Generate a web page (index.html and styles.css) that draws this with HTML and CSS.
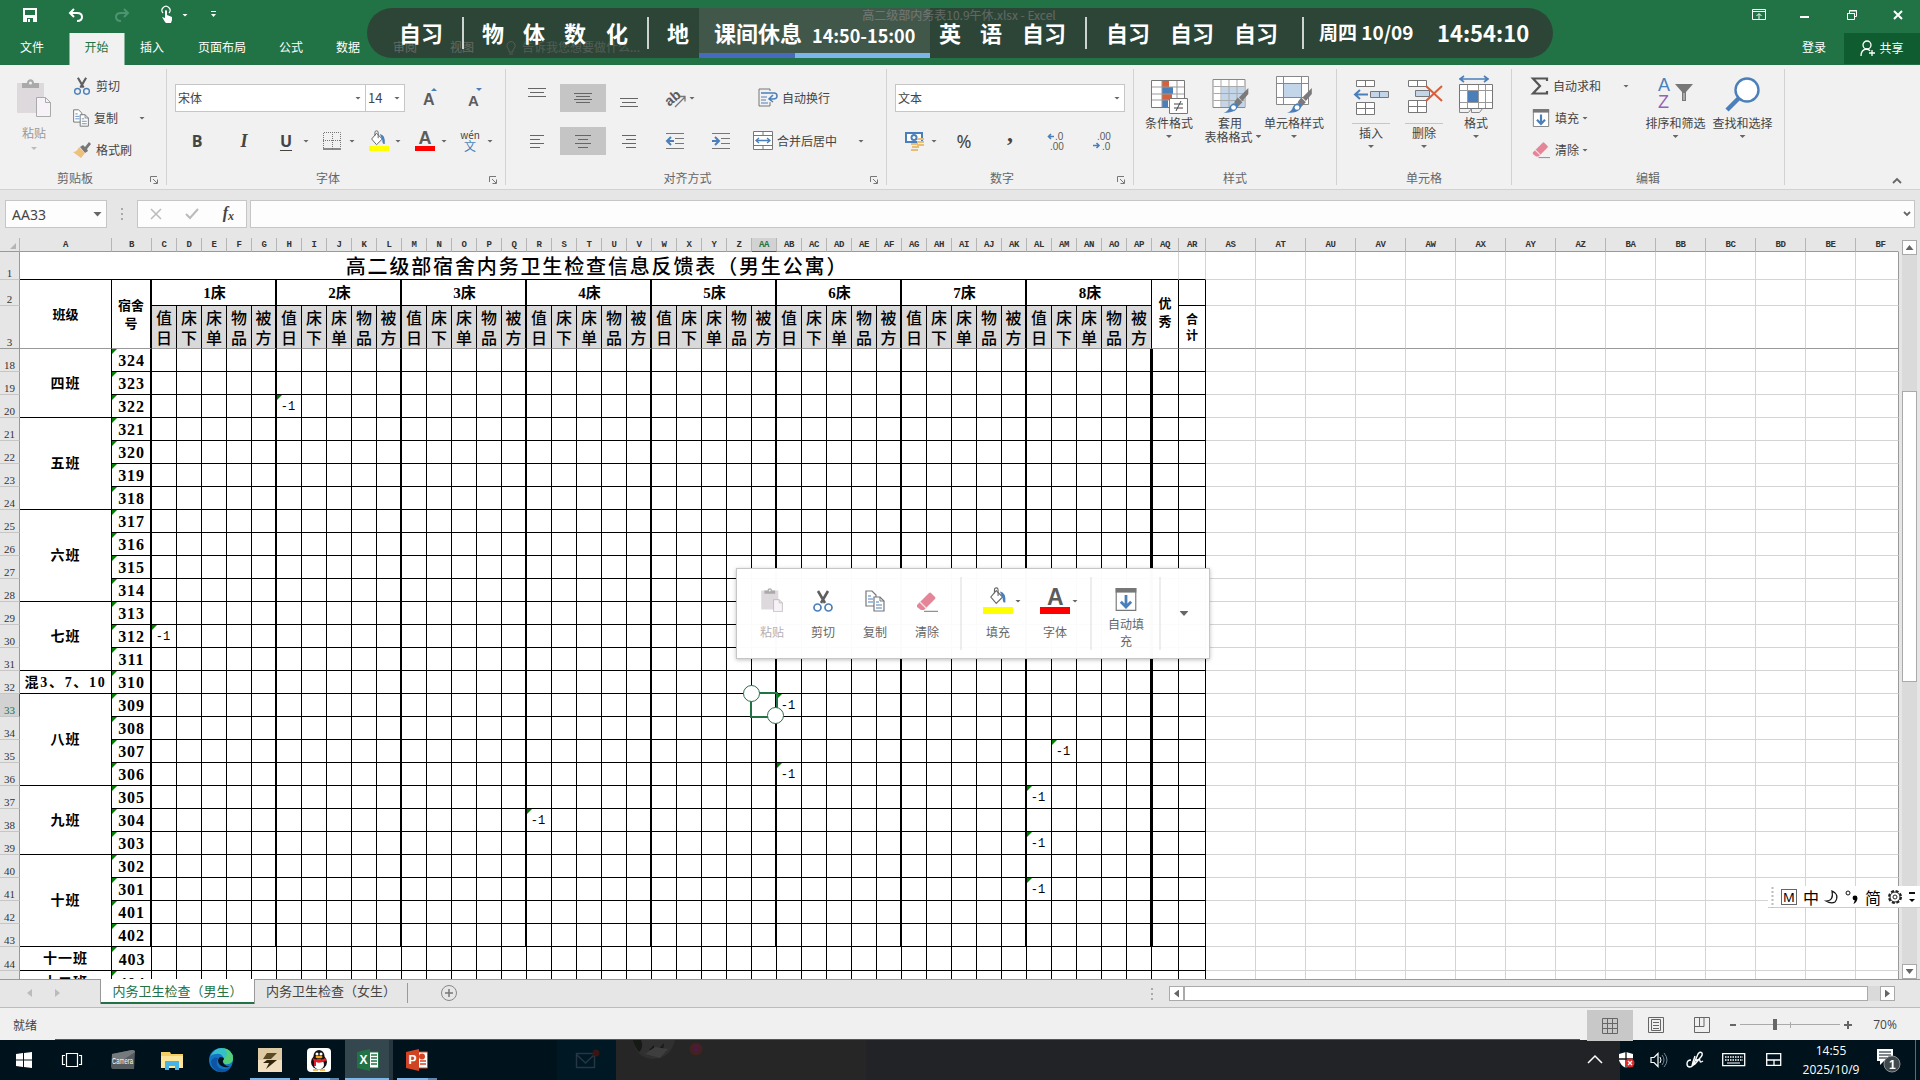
FILE: index.html
```html
<!DOCTYPE html>
<html lang="zh-CN">
<head>
<meta charset="utf-8">
<title>高二级部内务表10.9午休.xlsx - Excel</title>
<link rel="stylesheet" href="styles.css">
</head>
<body>
<svg width="0" height="0" class="defs">
  <symbol id="cut" viewBox="0 0 20 22"><path d="M5 1l7 12M15 1L8 13" stroke="#5f5f5f" stroke-width="2.6" fill="none"/><circle cx="4.5" cy="17.5" r="3.5" fill="none" stroke="#4a7fba" stroke-width="1.7"/><circle cx="15.5" cy="17.5" r="3.5" fill="none" stroke="#4a7fba" stroke-width="1.7"/></symbol>
  <symbol id="copy" viewBox="0 0 20 22"><path d="M1 1h6l4 4v11H1z" fill="#fff" stroke="#777" stroke-width="1.2"/><path d="M3 6h3M3 9h5M3 12h5" stroke="#4a7fba"/><path d="M9 7h6l4 4v10H9z" fill="#fff" stroke="#777" stroke-width="1.2"/><path d="M15 7v4h4" fill="none" stroke="#777"/><path d="M11 12h3M11 15h6M11 18h6" stroke="#4a7fba"/></symbol>
  <symbol id="paste" viewBox="0 0 34 38"><path d="M0 4h27v30H0z" fill="#ded9dc"/><path d="M5 4h5c0-5 7-5 7 0h5v5H5z" fill="#aaa"/><circle cx="13.500" cy="4" r="1.500" fill="#f1f1f1"/><path d="M19.500 18.500h9l5 5v14h-14z" fill="#f6f2f7" stroke="#aaa"/><path d="M28.500 18.500v5h5" fill="none" stroke="#aaa"/></symbol>
  <symbol id="eraser" viewBox="0 0 22 20"><path d="M1 13L13 1q1-1 2 0l4 4q1 1 0 2L8 18H5L1 15z" fill="#e58598"/><path d="M4 10l6 6" stroke="#f7dfe4" stroke-width="1.300"/><path d="M8 19.300h14" stroke="#777"/></symbol>
  <symbol id="fill" viewBox="0 0 18 20"><path d="M.5.5h17v19H.5z" fill="#fff" stroke="#777"/><path d="M0 0h18v4H0z" fill="#777"/><path d="M9 6v10M4.500 12L9 16.500 13.500 12" fill="none" stroke="#4a7fba" stroke-width="2.400"/></symbol>
  <symbol id="bucket" viewBox="0 0 22 22"><path d="M8 4l7 7-7 7-6-7z" fill="#fff" stroke="#666" stroke-width="1.200"/><path d="M6 7V3q0-2 2-2t2 2v7" fill="none" stroke="#666" stroke-width="1.200"/><path d="M12 5q7 1 6 12-3 1-3-5z" fill="#4a7fba"/></symbol>
  <symbol id="brush" viewBox="0 0 22 22"><path d="M21 0v5l-5 6-3-3z" fill="#7a7a7a"/><path d="M12 8l4 4-4 4-3-4z" fill="#7a7a7a"/><path d="M0 21q4-1 5-5 3-5 7-2 1 7-12 7z" fill="#4a7fba"/><circle cx="8.500" cy="16.500" r="2" fill="#fff"/></symbol>
  <symbol id="launch" viewBox="0 0 8 8"><path d="M.5 6V.5H7M3 3l4 4M7.500 3.500v4h-4" fill="none" stroke="#777"/></symbol>
  <symbol id="al" viewBox="0 0 18 14"><path d="M2 1.500h14M2 5.500h10M2 9.500h14M2 13.500h10" stroke="#666"/></symbol>
  <symbol id="ac" viewBox="0 0 18 14"><path d="M1 1.500h16M4 5.500h10M1 9.500h16M4 13.500h10" stroke="#666"/></symbol>
  <symbol id="ar" viewBox="0 0 18 14"><path d="M2 1.500h14M6 5.500h10M2 9.500h14M6 13.500h10" stroke="#666"/></symbol>
  <symbol id="three" viewBox="0 0 18 10"><path d="M0 .5h18M2 4.500h14M0 8.500h18" stroke="#666"/></symbol>
  <symbol id="indent" viewBox="0 0 18 16"><path d="M0 .5h18M9 5.500h9M9 10.500h9M0 15.500h18" stroke="#777"/></symbol>
</svg>

<header class="top">
  <div class="pts titlebar">
    <svg width="14" height="14"><path d="M0 0h14v14H0z" fill="#fff"/><path d="M2 2h10v5H2zM4 10h6v4H4z" fill="#217346"/><path d="M5 11h2v3H5z" fill="#fff"/></svg>
    <svg width="16" height="14"><path d="M6 1L2 5l4 4M2 5h7q5 0 5 4t-5 4" fill="none" stroke="#fff" stroke-width="2"/></svg>
    <svg width="16" height="14"><path d="M10 1l4 4-4 4M14 5H7Q2 5 2 9t5 4" fill="none" stroke="#4f9470" stroke-width="2"/></svg>
    <svg width="14" height="16"><path d="M4 15l-3-5 3 1V4q1-2 2 0v4l5 2v3l-1 3H5z" fill="#fff"/><path d="M2 6a4 4 0 1 1 6 0" fill="none" stroke="#fff" stroke-width="1.200"/></svg>
    <i class="dd w"></i>
    <svg width="8" height="8"><path d="M1 .5h5" stroke="#fff"/><path d="M1 3h5L3.500 6z" fill="#fff"/></svg>
    <span class="doc">高二级部内务表10.9午休.xlsx - Excel</span>
    <svg width="14" height="12"><path d="M.5.5h13v10H.5zM.5 2.500h13M7 10V5M4.500 7L7 4.500 9.500 7" fill="none" stroke="#fff"/></svg>
    <svg width="10" height="10"><path d="M0 7h9" stroke="#fff" stroke-width="2"/></svg>
    <svg width="10" height="10"><path d="M2.500 3V.5h7v6H7M.5 3.500h7v6h-7zM0 3.500h8M2 1h8" fill="none" stroke="#fff"/></svg>
    <svg width="10" height="10"><path d="M1 1l8 8M9 1L1 9" stroke="#fff" stroke-width="2"/></svg>
  </div>
  <nav class="pts tabs">
    <span>文件</span><span class="active">开始</span><span>插入</span><span>页面布局</span><span>公式</span><span>数据</span><span>审阅</span><span>视图</span>
    <svg width="10" height="14"><path d="M3 9Q0 6 1 3q4-5 8 0 1 3-2 6v2H3zM3 13h4" fill="none" stroke="#b9d4c5"/></svg>
    <span class="l tell">告诉我您想要做什么...</span><span>登录</span>
    <span class="share"><svg width="16" height="16"><circle cx="7" cy="5" r="4" fill="none" stroke="#fff" stroke-width="1.300"/><path d="M1 16q0-6 5-7 3 0 4 2M12 10v6M9 13h6" fill="none" stroke="#fff" stroke-width="1.300"/></svg>共享</span>
  </nav>
  <div class="schedule">
    <b>自习</b><hr><b>物</b><b>体</b><b>数</b><b>化</b><hr><b>地</b>
    <div class="break"><b>课间休息</b><b class="time">14:50-15:00</b></div>
    <b>英</b><b>语</b><b>自习</b><hr><b>自习</b><b>自习</b><b>自习</b><hr><b class="date">周四 10/09</b><b>14:54:10</b>
  </div>
</header>

<section class="ribbon">
  <div class="group g1">
    <div class="clip">
      <div class="paste"><svg width="34" height="38"><use href="#paste"/></svg><span>粘贴</span><i class="dd"></i></div>
      <div class="cmds">
        <div><svg width="18" height="18"><use href="#cut"/></svg><span>剪切</span></div>
        <div class="near"><svg width="18" height="18"><use href="#copy"/></svg><span>复制</span><i class="dd"></i></div>
        <div><svg width="18" height="16"><path d="M16 0l2 2-4 5 1 2-3 2-5-6 3-2 2 2z" fill="#777"/><path d="M6 5l6 6-4 5-8-6q4 0 6-5z" fill="#eec07c"/></svg><span>格式刷</span></div>
      </div>
    </div>
    <footer>剪贴板<svg width="8" height="8"><use href="#launch"/></svg></footer>
  </div>
  <div class="group g2">
    <div class="row font-row"><div class="combo name">宋体<i class="dd"></i></div><div class="combo size">14<i class="dd"></i></div>
      <svg width="18" height="20"><text x="1" y="17" font-size="16" font-weight="bold">A</text><path d="M9 3l3-3 3 3z" fill="#4a7fba"/></svg>
      <svg width="18" height="20"><text x="1" y="18" font-size="15" font-weight="bold">A</text><path d="M9 0h6l-3 3z" fill="#4a7fba"/></svg></div>
    <div class="row pts style-row">
      <b class="ltr">B</b><b class="ltr it">I</b><b class="ltr un">U</b><i class="dd"></i>
      <svg width="18" height="18"><path d="M.5 16V.5h17V16M9.500 0v17M0 8.500h18" stroke="#777" stroke-dasharray="1 1" fill="none"/><path d="M0 17h18" stroke="#666" stroke-width="1.500"/></svg><i class="dd"></i>
      <svg width="20" height="22"><use href="#bucket" width="20" height="18"/><path d="M0 16h20v5H0z" fill="#ff0"/></svg><i class="dd"></i>
      <svg width="20" height="22"><text x="3.500" y="14" font-size="18" font-weight="bold">A</text><path d="M0 16h20v5H0z" fill="red"/></svg><i class="dd"></i>
      <span class="wen">wén<em>文</em></span><i class="dd"></i>
    </div>
    <footer>字体<svg width="8" height="8"><use href="#launch"/></svg></footer>
  </div>
  <div class="group g3">
    <div class="row pts al1">
      <svg class="up" width="18" height="10"><use href="#three"/></svg><span class="on"><svg width="18" height="12"><path d="M0 1.500h18M2 4.500h14M0 7.500h18M2 10.500h14" stroke="#666"/></svg></span><svg class="down" width="18" height="10"><use href="#three"/></svg>
      <svg width="20" height="20"><text x="-2" y="13" font-size="14" font-weight="bold" transform="rotate(-40 8 10)">ab</text><path d="M8 19L18 9M13 8.500h5v5" fill="none" stroke="#777" stroke-width="1.300"/></svg><i class="dd"></i>
      <svg width="20" height="20"><path d="M12 1H1v17h11v-4M12 1v2" fill="none" stroke="#777"/><path d="M3 5h13q3 0 3 3t-4 3h-3M15 7l-4 4 4 3" fill="none" stroke="#4a7fba" stroke-width="1.500"/><path d="M3 9h6M3 12h5M3 15h7" stroke="#4a7fba"/></svg><span class="l">自动换行</span>
    </div>
    <div class="row pts al2">
      <svg width="18" height="14"><use href="#al"/></svg><span class="on"><svg width="18" height="14"><use href="#ac"/></svg></span><svg width="18" height="14"><use href="#ar"/></svg>
      <svg width="18" height="16"><use href="#indent"/><path d="M8 8H2M5 4L1 8l4 4" fill="none" stroke="#4a7fba" stroke-width="2"/></svg>
      <svg width="18" height="16"><use href="#indent"/><path d="M0 8h6M3 4l4 4-4 4" fill="none" stroke="#4a7fba" stroke-width="2"/></svg>
      <svg width="20" height="20"><path d="M.5.5h19v18H.5zM0 4.500h20M0 14.500h20M10 0v4M10 15v4" fill="#fff" stroke="#777"/><path d="M3 9.500h14M6 7L3 9.500 6 12M14 7l3 2.500-3 2.500" fill="none" stroke="#4a7fba" stroke-width="1.300"/></svg><span class="l">合并后居中</span><i class="dd"></i>
    </div>
    <footer>对齐方式<svg width="8" height="8"><use href="#launch"/></svg></footer>
  </div>
  <div class="group g4">
    <div class="row"><div class="combo num">文本<i class="dd"></i></div></div>
    <div class="row pts num-row">
      <svg width="20" height="20"><path d="M1 1h18v11H1z" fill="#4a7fba"/><path d="M3 3h14v7H3z" fill="#fff"/><circle cx="10" cy="6.500" r="3.500" fill="#4a7fba"/><circle cx="10" cy="6.500" r="1.500" fill="#fff"/><path d="M7 13h7M8 16h7M7 19h7M13 8h7M13 11h7M13 14h7" stroke="#e9bd73" stroke-width="2"/></svg><i class="dd"></i>
      <span class="pct">%</span><b class="comma">,</b>
      <svg width="18" height="18"><path d="M7 4.500H2M4 2L1.500 4.500 4 7" stroke="#4a7fba" stroke-width="1.600" fill="none"/><text x="8" y="8" font-size="10">.0</text><text x="3" y="18" font-size="10">.00</text></svg>
      <svg width="18" height="18"><path d="M0 13.500h6M3.500 11L6 13.500 3.500 16" stroke="#4a7fba" stroke-width="1.600" fill="none"/><text x="4" y="8" font-size="10">.00</text><text x="9" y="18" font-size="10">.0</text></svg>
    </div>
    <footer>数字<svg width="8" height="8"><use href="#launch"/></svg></footer>
  </div>
  <div class="group g5">
    <div class="pts bigs">
      <div class="big"><svg width="38" height="38"><path d="M1.500 4.500h33v27h-33z" fill="#fff" stroke="#777"/><path d="M12 5h7v6h-7zM12 18h10v6H12z" fill="#d75f3c"/><path d="M12 11h11v7H12zM12 24h6v7h-6z" fill="#4a7fba"/><path d="M2 11h32M2 18h32M2 24h32M12 5v26M27 5v26" stroke="#999"/><path d="M19.500 22.500h18v15h-18z" fill="#fff" stroke="#777"/><path d="M24 28h9M24 32h9M31 25l-5 10" stroke="#444"/></svg><span>条件格式</span><i class="dd"></i></div>
      <div class="big"><svg width="38" height="38"><path d="M1.500 3.500h32v28h-32z" fill="#fff" stroke="#888"/><path d="M10 11h23v20H10z" fill="#c3d5e8"/><path d="M2 10.500h31M2 17.500h31M2 24.500h31M9.500 4v27M17.500 4v27M25.500 4v27" stroke="#aaa"/><use href="#brush" x="12" y="12" width="26" height="26"/></svg><span>套用</span><span class="second">表格格式<i class="dd in"></i></span></div>
      <div class="big"><svg width="38" height="38"><path d="M1.500.5h32v28h-32z" fill="#fff" stroke="#888"/><path d="M8 7h18v14H8z" fill="#c3d5e8"/><path d="M2 7.500h31M2 21.500h31M8.500 1v27M26.500 1v27" stroke="#888"/><use href="#brush" x="12" y="12" width="26" height="26"/></svg><span>单元格样式</span><i class="dd"></i></div>
    </div>
    <footer>样式</footer>
  </div>
  <div class="group g6">
    <div class="pts bigs">
      <div class="big split"><svg width="36" height="38"><path d="M3.500 4.500h18v6h-18zM12.500 4v7M3.500 26.500h18v12h-18zM12.500 26v12M3 32.500h19" fill="#fff" stroke="#777"/><path d="M17.500 15.500h18v6h-18z" fill="#c3d5e8" stroke="#777"/><path d="M26.500 16v5" stroke="#777"/><path d="M15 18.500H2M7 14l-5 4.500L7 23" fill="none" stroke="#4a7fba" stroke-width="2"/></svg><span>插入</span><i class="dd"></i></div>
      <div class="big split"><svg width="36" height="38"><path d="M2.500 4.500h18v6h-18zM11.500 4v7M2.500 24.500h18v12h-18zM11.500 24v12M2 30.500h19" fill="#fff" stroke="#777"/><path d="M9.500 14.500h14v6h-14z" fill="#c3d5e8" stroke="#777"/><path d="M20 10l16 15M36 10L20 25" fill="none" stroke="#d75f3c" stroke-width="2"/></svg><span>删除</span><i class="dd"></i></div>
      <div class="big"><svg width="36" height="38"><path d="M1 3h30M6 0L2 3l4 3M26 0l4 3-4 3" fill="none" stroke="#4a7fba" stroke-width="1.600"/><path d="M1.500 8.500h33v24h-33z" fill="#fff" stroke="#777"/><path d="M9 15h11v11H9z" fill="#4a7fba"/><path d="M2 14.500h32M2 26.500h32M9.500 9v23M20.500 9v23M27.500 9v23" stroke="#999"/><path d="M1.500 32v4.500h9l3-4 0 4h8l3-4" fill="none" stroke="#888"/></svg><span>格式</span><i class="dd"></i></div>
    </div>
    <footer>单元格</footer>
  </div>
  <div class="group g7">
    <div class="edit">
      <div class="cmds">
        <div class="sum"><svg width="18" height="18"><path d="M16 4V1.500H2L9 9l-7 7.500h14V14" fill="none" stroke="#555" stroke-width="2.200"/></svg><span>自动求和</span><i class="dd"></i></div>
        <div><svg width="18" height="18"><use href="#fill"/></svg><span>填充</span><i class="dd"></i></div>
        <div><svg width="18" height="18"><use href="#eraser"/></svg><span>清除</span><i class="dd"></i></div>
      </div>
      <div class="big"><svg width="36" height="38"><text class="az" x="0" y="15" font-size="18">A</text><text class="zz" x="0" y="32" font-size="18">Z</text><path d="M17 8h18l-7 8v9h-4v-9z" fill="#777"/><path d="M26 17v7" stroke="#ddd"/></svg><span>排序和筛选</span><i class="dd"></i></div>
      <div class="big"><svg width="36" height="38"><circle cx="22" cy="14" r="11.500" fill="#fff" stroke="#4a7fba" stroke-width="2.400"/><path d="M14 22L2 34" stroke="#4a7fba" stroke-width="4.500"/></svg><span>查找和选择</span><i class="dd"></i></div>
    </div>
    <footer>编辑</footer>
  </div>
  <svg class="collapse" width="10" height="8"><path d="M1 6l4-4 4 4" fill="none" stroke="#666" stroke-width="1.800"/></svg>
</section>

<section class="formula">
  <div class="namebox">AA33<i class="dd big-dd"></i></div>
  <div class="dots"></div>
  <div class="fx"><svg width="12" height="12"><path d="M1 1l10 10M11 1L1 11" stroke="#bbb" stroke-width="1.500"/></svg><svg width="14" height="12"><path d="M1 6l4 4 8-9" fill="none" stroke="#bbb" stroke-width="2"/></svg><i class="fxi">f<sub>x</sub></i></div>
  <div class="input"><svg width="8" height="6"><path d="M1 1l3 3 3-3" fill="none" stroke="#666" stroke-width="1.800"/></svg></div>
</section>

<main class="sheet">
  <div class="cells"><table id="grid"></table></div>
  <div class="vscroll"><i class="btn"><i class="tri u"></i></i><div class="thumb"></div><i class="btn end"><i class="tri d"></i></i></div>
</main>

<section class="sheettabs">
  <i class="tri lft pale"></i><i class="tri rgt pale"></i>
  <span class="tab active">内务卫生检查（男生）</span><span class="tab">内务卫生检查（女生）</span>
  <svg class="plus" width="18" height="18"><circle cx="9" cy="9" r="7.500" fill="none" stroke="#888"/><path d="M9 5v8M5 9h8" stroke="#777" stroke-width="1.500"/></svg>
  <div class="dots"></div>
  <div class="hscroll"><i class="btn"><i class="tri lft"></i></i><div class="thumb"></div><i class="btn end"><i class="tri rgt"></i></i></div>
</section>

<section class="pts status">
  <span>就绪</span>
  <span class="view"><svg width="18" height="18"><path d="M1.500 1.500h15v15h-15zM1 6.500h16M1 11.500h16M6.500 1v16M11.500 1v16" fill="none" stroke="#666"/></svg></span>
  <svg width="18" height="18"><path d="M1.500 1.500h15v15h-15zM4.500 3.500h9v11h-9zM6 6.500h6M6 9.500h6M6 12.500h6" fill="none" stroke="#666"/></svg>
  <svg width="18" height="18"><path d="M1.500 1.500h15v15h-15zM1 10.500h10v-9M6.500 1v9" fill="none" stroke="#666"/></svg>
  <svg width="8" height="8"><path d="M1 4h6" stroke="#666" stroke-width="2"/></svg>
  <div class="slider"><i></i></div>
  <svg width="8" height="8"><path d="M0 4h8M4 0v8" stroke="#666" stroke-width="2"/></svg>
  <span class="zoom">70%</span>
</section>

<footer class="pts taskbar">
  <svg width="16" height="16"><path d="M0 2l7-1v6.500H0zM8 1l8-1v7.500H8zM0 8.500h7V15l-7-1zM8 8.500h8V16l-8-1z" fill="#fff"/></svg>
  <svg width="20" height="16"><path d="M4.500 1.500h11v13h-11zM3 3.500H.5v9H3M17 3.500h2.500v9H17" fill="none" stroke="#fff" stroke-width="1.200"/></svg>
  <svg width="24" height="22"><path d="M1 5l20-4q3 0 3 2l-1 17H2q-2 0-2-3z" fill="#555b5f"/><path d="M1 5l20-4q3 0 3 2l-12 8H1z" fill="#757a7d"/><text class="cam" x="1" y="15" font-size="9" textLength="21" lengthAdjust="spacingAndGlyphs">Camera</text></svg>
  <svg width="22" height="20"><path d="M0 2h9l1 2h12v14H0z" fill="#f5cf62"/><path d="M0 6h22v12H0z" fill="#ffe69a"/><path d="M4 20v-9h14v9h-4v-4H8v4z" fill="#45b5e8"/></svg>
  <svg width="24" height="24"><circle cx="12" cy="12" r="12" fill="#1474c4"/><path d="M1 9Q5 0 13 0q11 1 11 11-1 6-8 5-3-2-1-5-2-6-8-5-4 0-6 3z" fill="#35bfc9"/><path d="M13 0q11 1 11 11-1 6-8 5-3-2-1-5 3-3 3-6-1-4-5-5z" fill="#54cf78"/><path d="M9 10q-4 9 4 11 5 1 9-2-3 6-11 5Q2 21 2 13q3-5 7-3z" fill="#0c55a4"/><path d="M11 9q-4 3 0 8 5 4 12 1-3 2-7-1-4-3-1-6 0-2-4-2z" fill="#00131c"/></svg>
  <svg width="24" height="24"><path d="M0 0h24v24H0z" fill="#decaa4"/><path d="M0 12h24v12H0z" fill="#f1dfbf"/><path d="M9 5h10l-6 6H5z" fill="#5a4a24"/><path d="M9 12h10L8 21l3-6H5z" fill="#33260c"/></svg>
  <svg width="24" height="24"><rect width="24" height="24" rx="4" fill="#fff"/><ellipse cx="12" cy="14" rx="8" ry="7.500" fill="#111"/><ellipse cx="12" cy="8" rx="5.500" ry="6" fill="#111"/><ellipse cx="12" cy="16.500" rx="5" ry="5" fill="#fff"/><path d="M5.500 10q6.500 3 13 0l.8 2.500q-7 3.500-10.300 1.500v4H7v-4.500z" fill="#e21c2b"/><circle cx="10" cy="6" r="1.500" fill="#fff"/><circle cx="14" cy="6" r="1.500" fill="#fff"/><ellipse cx="12" cy="9" rx="3.500" ry="1.300" fill="#f8a51b"/><path d="M6 22h5M13 22h5" stroke="#f8a51b" stroke-width="1.500"/></svg>
  <span class="tile"><svg width="22" height="22"><path d="M12 3h9.500v16H12z" fill="#fff" stroke="#217346"/><path d="M14 6h6M14 9h6M14 12h6M14 15h6" stroke="#217346" stroke-width="1.500"/><path d="M0 3l13-3v22L0 19z" fill="#217346"/><text class="app" x="2.500" y="15" font-size="12">X</text></svg></span>
  <svg width="22" height="22"><path d="M12 3h9.500v16H12z" fill="#fff" stroke="#d04423"/><path d="M14 15h6M14 12h6" stroke="#d04423" stroke-width="1.300"/><circle cx="16" cy="7.500" r="3" fill="#d04423"/><path d="M0 3l13-3v22L0 19z" fill="#d04423"/><text class="app" x="2.500" y="15" font-size="12">P</text></svg>
  <svg width="24" height="20"><path d="M2.500 3.500h18v14h-18zM3 5l8.500 8L20 5" fill="none" stroke="#263643" stroke-width="1.500"/><circle cx="22" cy="3" r="3.500" fill="#3a1512"/></svg>
  <svg class="peek" width="72" height="20"><path d="M0 0q3 18 20 19Q38 18 42 0z" fill="#303030"/><path d="M0 0q1 6 6 12 5-4 2-12zM16 10l5-5v5zM26 9l5-6-1 7z" fill="#151a14"/><path d="M12 14l10-7 13 2-8 9z" fill="#3e3e3e"/><circle cx="63" cy="9" r="6.500" fill="#42231f"/><circle cx="63" cy="8" r="3.500" fill="#4c1a3a"/></svg>
  <svg width="16" height="10"><path d="M1 8l7-7 7 7" fill="none" stroke="#fff" stroke-width="1.500"/></svg>
  <svg width="18" height="18"><path d="M8 1l7 2v6q-1 5-7 8-6-3-7-8V3z" fill="#fff"/><path d="M8 1v16M1 8h14" stroke="#111" stroke-width="1.300"/><circle cx="12" cy="12" r="4.500" fill="#d92b2b"/><path d="M10 10l4 4M14 10l-4 4" stroke="#fff" stroke-width="1.200"/></svg>
  <svg width="18" height="16"><path d="M1 5.500h3l4-4v13l-4-4H1z" fill="none" stroke="#fff" stroke-width="1.200"/><path d="M10 5q2 3 0 6" fill="none" stroke="#fff"/><path d="M12 3q4 5 0 10M14 1q6 7 0 14" fill="none" stroke="#789"/></svg>
  <svg width="18" height="18"><path d="M5 9q-4 0-4 4 0 3 3 3 3 0 5-6l3-7q2-3 4-1 1 2-2 5l-5 6-3 2 1-4 2-6M9 10q5-3 5 0 0 2 3 0" fill="none" stroke="#fff" stroke-width="1.400"/></svg>
  <svg width="24" height="14"><path d="M.7.7h22v12H.7z" fill="none" stroke="#fff" stroke-width="1.300"/><path d="M3 4h18M3 7h18" stroke="#fff" stroke-width="1.300" stroke-dasharray="1.500 1"/><path d="M5 10h13" stroke="#fff"/></svg>
  <svg width="16" height="14"><path d="M.7.700h14v11.600H.7zM1 7h14M8 7v5" fill="none" stroke="#fff" stroke-width="1.300"/></svg>
  <span class="clock">14:55<br>2025/10/9</span>
  <svg width="26" height="26"><path d="M2 2h16v12H9l-4 4v-4H2z" fill="#fff"/><path d="M4 5h12M4 8h12M4 11h8" stroke="#00131c" stroke-width="1.200"/><circle cx="17" cy="17" r="8" fill="#40484c" stroke="#8a9195"/><text class="badge" x="14" y="21.500" font-size="12">1</text></svg>
</footer>

<aside class="mini">
  <div class="pts mini-row">
    <div class="pale-item"><svg width="22" height="24"><use href="#paste"/></svg><span>粘贴</span></div>
    <div><svg width="20" height="22"><use href="#cut"/></svg><span>剪切</span></div>
    <div><svg width="20" height="22"><use href="#copy"/></svg><span>复制</span></div>
    <div><svg width="22" height="20"><use href="#eraser"/></svg><span>清除</span></div>
    <hr>
    <div><svg width="30" height="28"><use href="#bucket" x="4" width="24" height="20"/><path d="M0 20h30v7H0z" fill="#ff0"/></svg><span>填充</span></div><i class="dd side"></i>
    <div><svg width="30" height="28"><text x="7" y="18" font-size="23" font-weight="bold">A</text><path d="M0 20h30v7H0z" fill="red"/></svg><span>字体</span></div><i class="dd side"></i>
    <hr>
    <div class="auto"><svg width="22" height="23"><use href="#fill"/></svg><span>自动填<br>充</span></div>
    <hr><i class="dd big-dd"></i>
  </div>
</aside>

<aside class="ime">
  <svg width="4" height="22"><path d="M1.500 1v21" stroke="#bbb" stroke-width="2" stroke-dasharray="2 2"/></svg>
  <span class="box">M</span><span>中</span>
  <svg width="14" height="14"><path d="M7 1q8 4 3 11-4 2-9-1 8 0 6-10z" fill="none" stroke="#111" stroke-width="1.200"/></svg>
  <svg width="14" height="14"><circle cx="3" cy="3" r="2" fill="none" stroke="#111"/><circle cx="10" cy="8" r="2.400"/><path d="M12.400 8q0 4-4 6l2-5z"/></svg>
  <span>简</span>
  <svg width="16" height="16"><circle cx="8" cy="8" r="6" fill="none" stroke="#222" stroke-width="2" stroke-dasharray="3 1.700"/><circle cx="8" cy="8" r="5" fill="none" stroke="#222"/><circle cx="8" cy="8" r="2" fill="none" stroke="#222"/></svg>
  <svg class="more" width="6" height="12"><path d="M0 2h6" stroke="#111" stroke-width="2"/><path d="M0 8h6l-3 3z"/></svg>
</aside>
<script src="script.js"></script>
</body>
</html>
```
FILE: styles.css
```css
* { box-sizing: border-box; }
body { margin: 0; width: 1920px; height: 1080px; overflow: hidden; display: flex; flex-direction: column; position: relative; background: #e6e6e6; color: #444; font: 12px/16px "Noto Sans CJK SC", sans-serif; }
svg { display: block; flex: none; overflow: visible; }
svg text { font-family: "Liberation Sans", sans-serif; fill: #5c5c5c; }
.defs { position: absolute; }
i { font-style: normal; }
hr { border: 0; margin: 0; }

/* Rows whose items are centred on the start of their column */
.pts { display: grid; align-items: center; }
.pts > * { justify-self: start; translate: -50% 0; white-space: nowrap; }
.pts > .l { translate: none; }

.dd { display: block; width: 6px; height: 3px; background: #666; clip-path: polygon(0 0, 100% 0, 50% 100%); flex: none; }
.dd.w { background: #fff; }
.dd.big-dd { width: 9px; height: 5px; }
.tri { display: block; width: 8px; height: 5px; background: #666; }
.tri.u { clip-path: polygon(0 100%, 50% 0, 100% 100%); }
.tri.d { clip-path: polygon(0 0, 50% 100%, 100% 0); }
.tri.lft { width: 5px; height: 8px; clip-path: polygon(0 50%, 100% 0, 100% 100%); }
.tri.rgt { width: 5px; height: 8px; clip-path: polygon(0 0, 100% 50%, 0 100%); }
.tri.pale { background: #bbb; }

/* Title bar and tabs */
.top { height: 65px; flex: none; background: #217346; color: #fff; position: relative; }
.titlebar { height: 30px; padding-left: 30px; grid-template-columns: 46px 46px 46px 17px 29px 745px 800px 46px 47px 46px 20px; }
.tabs { height: 35px; padding-left: 32px; grid-template-columns: 64.500px 55.500px 70px 69px 57px 57px 57px 49px 11px 1292px 68px 38px; }
.tabs > span { margin-top: -1px; }
.tabs .active { margin-top: 3px; width: 55px; height: 32px; line-height: 28px; background: #f1f1f1; color: #217346; text-align: center; }
.tell { color: #b9d4c5; }
.tabs .share { margin-top: 2px; width: 76px; height: 31px; padding-bottom: 2px; background: #0e5c2f; display: flex; align-items: center; justify-content: center; gap: 3px; }
.schedule { position: absolute; left: 367px; top: 8px; width: 1186px; height: 50px; border-radius: 25px; background: rgba(49, 55, 50, .76); display: grid; align-items: center; padding-left: 32px; overflow: hidden; grid-template-columns: 63px 20px 41px 41px 42px 41px 20px 32px 240px 41px 42px 63px 21px 64px 64px 68px 17px 118px 100px; font-size: 22px; line-height: 48px; white-space: nowrap; }
.schedule hr { width: 2px; height: 32px; background: #cdd3cf; }
.schedule > b { margin-top: -2px; }
.break { width: 231px; height: 50px; padding-left: 15px; display: flex; gap: 10px; background: linear-gradient(90deg, #466abd 0 96px, #7cb5ea 96px) bottom / 100% 5px no-repeat, rgba(255, 255, 255, .1); }
.time { font-size: 18px; line-height: 54px; }
.date { font-size: 19px; }

/* Ribbon */
.ribbon { height: 125px; flex: none; display: flex; background: #f1f1f1; border-bottom: 1px solid #d2d2d2; }
.group { height: 116px; margin-top: 4px; border-right: 1px solid #d2d2d2; display: flex; flex-direction: column; }
.group footer { height: 14px; margin-top: auto; line-height: 14px; text-align: center; color: #666; position: relative; }
.group footer svg { position: absolute; right: 8px; top: 5px; }
.g1 { width: 167px; } .g2 { width: 339px; } .g3 { width: 381px; } .g4 { width: 247px; } .g5 { width: 203px; } .g6 { width: 175px; } .g7 { width: 273px; }
.g1 footer { padding-right: 16px; } .g2 footer { padding-right: 16px; } .g3 footer { padding-right: 17px; } .g4 footer { padding-right: 16px; }
.clip, .edit { display: flex; }
.paste { width: 68px; padding-top: 10px; display: flex; flex-direction: column; align-items: center; color: #999; }
.paste span { margin: 8px 0 6px; }
.paste .dd { background: #bbb; }
.cmds { padding: 1px 0 0 5px; }
.cmds > div { height: 32px; display: flex; align-items: center; gap: 5px; white-space: nowrap; }
.cmds .near { gap: 4px; margin-left: -1px; }
.cmds .near .dd { margin-left: 17px; }
.row { height: 28px; color: #444; }
.g2 .row, .g3 .row, .g4 .row { margin-top: 15px; }
.combo { height: 28px; background: #fff; border: 1px solid #c6c6c6; display: flex; align-items: center; justify-content: space-between; padding: 0 4px 0 2px; }
.font-row { display: flex; align-items: center; padding-left: 8px; }
.font-row svg { margin-left: 17px; margin-right: 10px; }
.combo.name { width: 191px; }
.combo.size { width: 40px; margin-left: -1px; font-size: 13px; }
.g4 .row:first-child { padding-left: 8px; }
.combo.num { width: 230px; }
.style-row { padding-left: 30px; grid-template-columns: 47px 42px 20px 26px 20px 27px 19px 27px 19px 26px 20px 10px; }
.ltr { font: bold 16px "Open Sans", sans-serif; }
.it { font-family: "Liberation Serif", serif; font-style: italic; font-size: 18px; }
.un { text-decoration: underline; text-underline-offset: 3px; }
.wen { font-size: 10px; line-height: 8px; text-align: center; }
.wen em { display: block; font-style: normal; font-size: 12px; line-height: 13px; color: #4a7fba; }
.on { width: 46px; height: 28px; background: #c5c5c5; display: flex; align-items: center; justify-content: center; }
.al1 { padding-left: 31px; grid-template-columns: 46px 46px 48px 15px 76px 14px 10px; }
.al2 { padding-left: 31px; grid-template-columns: 46px 46px 46px 46px 42px 14px 84px 10px; }
.up { margin-bottom: 10px; }
.down { margin-top: 10px; }
.num-row { padding-left: 27px; grid-template-columns: 20px 30px 46px 46px 46px 10px; }
.pct { font: 18px "Noto Sans", sans-serif; }
.comma { font: bold 24px/14px "Liberation Serif", serif; margin-top: -16px; }
.big { display: flex; flex-direction: column; align-items: center; text-align: center; line-height: 15px; padding-top: 7px; white-space: nowrap; color: #444; }
.big span { margin-top: 1px; }
.big .dd { margin-top: 5px; }
.big .second { margin: -1px 0 0 6px; display: flex; align-items: center; gap: 3px; }
.big .dd.in { margin: 0; }
.bigs { align-items: start; }
.g5 .bigs { padding-left: 35px; grid-template-columns: 61px 64px 10px; }
.g6 .bigs { padding-left: 34px; grid-template-columns: 53px 52px 10px; }
.split span { margin-top: 9px; padding-top: 1px; border-top: 1px solid #c6c6c6; width: 38px; }
.edit .cmds { width: 124px; padding-left: 20px; }
.edit .cmds .sum { gap: 4px; margin-left: -1px; }
.edit .cmds .sum .dd { margin-left: 18px; }
.edit .cmds span + .dd { margin-left: -2px; }
.edit .big { width: 67px; }
.edit .big:nth-child(2) { margin-left: 6px; }
.zz { fill: #9362b5; }
.az { fill: #4a7fba; }
.collapse { margin: 112px 0 0 107px; }

/* Formula bar */
.formula { height: 48px; flex: none; display: flex; padding: 10px 5px 0; color: #444; }
.formula > div { height: 28px; }
.namebox { width: 102px; background: #fdfdfd; border: 1px solid #c6c6c6; display: flex; align-items: center; justify-content: space-between; padding: 0 4px 0 6px; font: 14px "Noto Sans", sans-serif; }
.dots { width: 2px; height: 12px; background: repeating-linear-gradient(#aaa 0 2px, transparent 2px 5px); }
.formula .dots { height: 12px; margin: 8px 14px 0 14px; }
.fx { width: 110px; background: #fdfdfd; border: 1px solid #c6c6c6; display: flex; align-items: center; justify-content: space-between; padding: 0 12px; }
.fxi { font: italic bold 16px "Liberation Serif", serif; }
.fxi sub { font-size: 12px; vertical-align: -2px; }
.input { flex: 1; margin-left: 3px; background: #fdfdfd; border: 1px solid #c6c6c6; display: flex; align-items: center; justify-content: flex-end; padding-right: 3px; }

/* Worksheet */
.sheet { height: 741px; flex: none; display: flex; }
.cells { width: 1899px; height: 741px; overflow: hidden; background: #fff; }
table { table-layout: fixed; border-spacing: 0; width: 1899px; color: #000; }
th, td { padding: 0; border: 0 solid #d4d4d4; border-width: 0 1px 1px 0; text-align: center; position: relative; font: 12px/12px "Liberation Mono", monospace; }
td { padding-top: 2px; }
th { background: #e6e6e6; font: bold 9px/11px "Liberation Mono", monospace; color: #333; border-color: #b5b5b5; border-bottom-color: #999; white-space: nowrap; letter-spacing: -.4px; vertical-align: bottom; }
th.rowhead { font: 11px/11px "Liberation Serif", serif; vertical-align: bottom; border-right-color: #999; border-bottom-color: #c6c6c6; letter-spacing: 0; }
th.sel { background: #d2d2d2; color: #217346; border-bottom-color: #217346; }
th.rowhead.sel { border-right-color: #217346; border-bottom-color: #c6c6c6; }
th.corner::after { content: ""; position: absolute; right: 3px; bottom: 2px; width: 6px; height: 6px; background: #b5b5b5; clip-path: polygon(100% 0, 100% 100%, 0 100%); }
td:last-child { border-right-color: #999; }
th:last-child { border-right-color: #e6e6e6; padding-left: 7px; }
td.k { border-color: #000; }
td.thick { border-right-width: 2px; }
td.thickest::after { content: ""; position: absolute; right: -2px; top: 0; bottom: -1px; width: 3px; background: #000; }
tr.freeze > *, tr > td.freeze { border-bottom-color: #999; }
td.title { padding: 0 4px 0 0; font: 500 20px/24px "Noto Sans CJK SC", sans-serif; letter-spacing: 1.850px; border-right-color: #d4d4d4; }
td.undark { border-right-color: #d4d4d4; }
td.bed { padding: 0 0 0 2px; font: bold 15px/20px "Liberation Serif", "Noto Sans CJK SC", serif; }
td.sub { padding: 0; background: #d9d9d9; font: 500 16px/20px "Noto Sans CJK SC", sans-serif; word-break: break-all; }
td.head { padding: 0; font: bold 13px/18px "Noto Sans CJK SC", sans-serif; word-break: break-all; }
td.narrow { padding: 0 6px 4px; }
td.total { padding: 0 6px; font-size: 12px; line-height: 16px; }
td.class { padding: 1px 0 0; font: bold 14px/18px "Liberation Serif", "Noto Sans CJK SC", serif; letter-spacing: 1px; white-space: nowrap; }
td.mixed { letter-spacing: 1.700px; }
td.room { padding: 2px 0 0 1px; font: bold 16px/18px "Liberation Serif", serif; letter-spacing: .9px; }
td.mark { padding: 2px 2px 0 0; }
td.flag::before { content: ""; position: absolute; left: 0; top: 0; width: 5px; height: 5px; background: #008000; clip-path: polygon(0 0, 100% 0, 0 100%); }
.cursor { position: absolute; z-index: 2; left: -2px; top: -2px; width: 28px; height: 26px; border: 2px solid #217346; }
.cursor::before, .cursor::after { content: ""; position: absolute; width: 15px; height: 15px; border: 1.500px solid #217346; border-radius: 50%; background: #fff; }
.cursor::before { left: -9px; top: -9px; }
.cursor::after { right: -8px; bottom: -8px; }

.btn { display: flex; align-items: center; justify-content: center; width: 15px; height: 15px; background: #fff; border: 1px solid #aaa; flex: none; }
.thumb { background: #fff; border: 1px solid #aaa; }
.vscroll { margin: 2px 0 0 3px; width: 15px; height: 739px; background: #dadada; display: flex; flex-direction: column; }
.vscroll .thumb { margin-top: 136px; height: 291px; }
.vscroll .end { margin-top: auto; }

/* Sheet tabs */
.sheettabs { height: 29px; flex: none; display: flex; border-top: 1px solid #999; border-bottom: 1px solid #bcbcbc; padding-left: 27px; font-size: 13px; line-height: 23px; }
.sheettabs > .tri { margin: 9px 23px 0 0; }
.tab { margin-top: -1px; height: 25px; width: 153px; white-space: nowrap; text-align: center; border-right: 1px solid #999; }
.tab.active { margin-left: 17px; width: 155px; background: #fff; color: #217346; border: 0 solid #999; border-width: 0 1px; box-shadow: inset 0 -2px #217346; }
.tab:not(.active) { margin-top: 3px; height: 20px; line-height: 15px; }
.sheettabs .plus { margin: 4px 0 0 32px; }
.sheettabs .dots { margin: 8px 16px 0 693px; }
.hscroll { margin-top: 6px; width: 726px; height: 15px; background: #dadada; display: flex; }
.hscroll .thumb { width: 684px; }
.hscroll .end { margin-left: auto; }

/* Status bar */
.status { height: 32px; flex: none; background: linear-gradient(#217346, #217346) 55px 100% / 1525px 1px no-repeat, #f0f0f0; padding-left: 25px; grid-template-columns: 1585px 46px 46px 31px 57px 58px 37px 20px; padding-bottom: 3px; }
.view { width: 46px; height: 31px; margin-top: 2px; background: #c8c8c8; display: flex; align-items: center; justify-content: center; }
.slider { width: 100px; height: 12px; background: linear-gradient(#aaa, #aaa) 0 5px / 100% 1px no-repeat, linear-gradient(#aaa, #aaa) 50px 3px / 1px 6px no-repeat; }
.slider i { display: block; width: 4px; height: 11px; margin-left: 33px; background: #666; }
.zoom { font: 12px "Open Sans", sans-serif; }

/* Taskbar */
.taskbar { height: 40px; flex: none; color: #fff; padding-left: 24px; grid-template-columns: 48px 51px 49px 49px 49px 49px 49px 49px 169px 83px 926px 32px 32px 36px 39px 40px 57px 57px 20px;
  background: linear-gradient(#76b9ed, #76b9ed) 250px 38px / 40px 2px no-repeat, linear-gradient(90deg, #76b9ed 31px, #5b88ad 31px) 299px 38px / 40px 2px no-repeat, linear-gradient(90deg, #76b9ed 31px, #5b88ad 31px) 397px 38px / 40px 2px no-repeat, linear-gradient(#667, #667) 1915px 0 / 1px 40px no-repeat, linear-gradient(90deg, #00131c 557px, #001724 557px 616px, #262626 616px 866px, #222326 866px 1620px, #00131c 1620px); }
.taskbar svg text { fill: #fff; font-weight: bold; }
.taskbar svg .cam { font-weight: normal; }
.tile { width: 48px; height: 40px; margin-left: 1px; display: flex; align-items: center; justify-content: center; padding-right: 2px; background: linear-gradient(#76b9ed, #76b9ed) 0 38px / 44px 2px no-repeat, linear-gradient(90deg, #34474f 44px, #26353e 44px); }
.peek { align-self: start; }
.clock { font: 12px/19px "Open Sans", sans-serif; text-align: center; }

/* Floating mini toolbar */
.mini { position: absolute; left: 736px; top: 568px; width: 474px; height: 91px; background: rgba(255, 255, 255, .985); border: 1px solid #c6c6c6; box-shadow: 0 1px 4px rgba(0, 0, 0, .25); color: #666; }
.mini-row { height: 89px; padding-left: 35px; grid-template-columns: 51px 52px 52px 34px 37px 20px 37px 20px 16px 35px 34px 24px 10px; }
.mini-row > div { align-self: start; display: flex; flex-direction: column; align-items: center; justify-content: flex-end; height: 71px; gap: 8px; text-align: center; }
.mini-row > div svg { margin-bottom: 4px; }
.mini-row > div:nth-child(6) svg, .mini-row > div:nth-child(8) svg { margin-bottom: 1px; }
.mini-row .auto { height: 80px; gap: 2px; line-height: 17px; }
.mini-row .auto svg { margin-bottom: 2px; }
.mini-row hr { width: 1px; height: 73px; background: #dcdcdc; }
.side { margin-bottom: 25px; }
.pale-item { color: #b5b0b3; }

/* Input method bar */
.ime { position: absolute; left: 1768px; top: 886px; width: 152px; height: 22px; background: #fff; border-bottom: 1px solid #ccc; color: #000; display: flex; align-items: center; gap: 6px; padding: 0 5px 0 3px; font-size: 16px; line-height: 20px; }
.more { margin-left: auto; }
.box { width: 16px; height: 16px; border: 1px solid #666; font: 13px/14px "Noto Sans", sans-serif; text-align: center; }
```
FILE: script.js
```js
const colName = n => (n >= 26 ? String.fromCharCode(64 + Math.floor(n / 26)) : '') + String.fromCharCode(65 + n % 26);
const COLS = 58, FIRST = 2, LAST = 41, AR = 43;
const widths = [20, 92, 40, ...Array(40).fill(25), 27, 27, ...Array(13).fill(50), 43];
const classes = [['四班', 3], ['五班', 4], ['六班', 4], ['七班', 3], ['混3、7、10', 1], ['八班', 4], ['九班', 3], ['十班', 4], ['十一班', 1], ['十二班', 1]];
const rooms = [324, 323, 322, 321, 320, 319, 318, 317, 316, 315, 314, 313, 312, 311, 310, 309, 308, 307, 306, 305, 304, 303, 302, 301, 401, 402, 403, 404];
const marks = { H20: 1, C30: 1, AB33: 1, AM35: 1, AB36: 1, AL37: 1, R38: 1, AL39: 1, AL41: 1 };
const thick = c => c >= 1 && c < LAST && (c - 1) % 5 === 0;

const grid = document.getElementById('grid');
const group = grid.appendChild(document.createElement('colgroup'));
widths.forEach(w => { group.appendChild(document.createElement('col')).style.width = w + 'px'; });

function row(height, label) {
  const tr = grid.appendChild(document.createElement('tr'));
  tr.style.height = height + 'px';
  const cls = label === '' ? 'corner' : 'rowhead' + (label === 33 ? ' sel' : '');
  cell(tr, label, cls, 1, 1, 'th');
  return tr;
}
function cell(tr, text, cls, colSpan = 1, rowSpan = 1, tag = 'td') {
  const el = tr.appendChild(document.createElement(tag));
  el.textContent = text;
  if (cls) el.className = cls;
  el.colSpan = colSpan;
  el.rowSpan = rowSpan;
  return el;
}
function blanks(tr, from) {
  for (let c = from; c < COLS; c++) cell(tr, '', '');
}

const head = row(14, '');
for (let c = 0; c < COLS; c++) cell(head, colName(c), c === 26 ? 'sel' : '', 1, 1, 'th');

const r1 = row(28, 1);
cell(r1, '高二级部宿舍内务卫生检查信息反馈表（男生公寓）', 'k title', 43);
cell(r1, '', 'k undark');
blanks(r1, 44);

const r2 = row(26, 2);
cell(r2, '班级', 'k head freeze', 1, 2);
cell(r2, '宿舍号', 'k head thick freeze', 1, 2);
for (let b = 1; b <= 8; b++) cell(r2, b + '床', 'k bed' + (b < 8 ? ' thick' : ''), 5);
cell(r2, '优秀', 'k head freeze narrow', 1, 2);
cell(r2, '', 'k');
blanks(r2, 44);

const r3 = row(43, 3);
r3.className = 'freeze';
for (let c = FIRST; c <= LAST; c++) cell(r3, ['值日', '床下', '床单', '物品', '被方'][(c - 2) % 5], 'k sub freeze' + (thick(c) ? ' thick' : ''));
cell(r3, '合计', 'k head total freeze');
blanks(r3, 44);

let index = 0;
for (const [name, span] of classes) {
  for (let i = 0; i < span; i++, index++) {
    const n = 18 + index;
    const tr = row(n >= 44 ? 24 : 23, n === 45 ? ' ' : n);
    if (i === 0) cell(tr, name, 'k class' + (name.length > 3 ? ' mixed' : ''), 1, span);
    const heavy = n < 44;
    cell(tr, rooms[index], 'k room flag' + (heavy ? ' thick' : ''));
    for (let c = FIRST; c <= AR; c++) {
      const marked = marks[colName(c) + n];
      const el = cell(tr, marked ? '-1' : '', 'k' + (heavy && thick(c) ? ' thick' : '') + (heavy && c === LAST ? ' thickest' : '') + (marked ? ' mark flag' : ''));
      if (n === 33 && c === 26) el.appendChild(document.createElement('div')).className = 'cursor';
    }
    blanks(tr, 44);
  }
}
```
